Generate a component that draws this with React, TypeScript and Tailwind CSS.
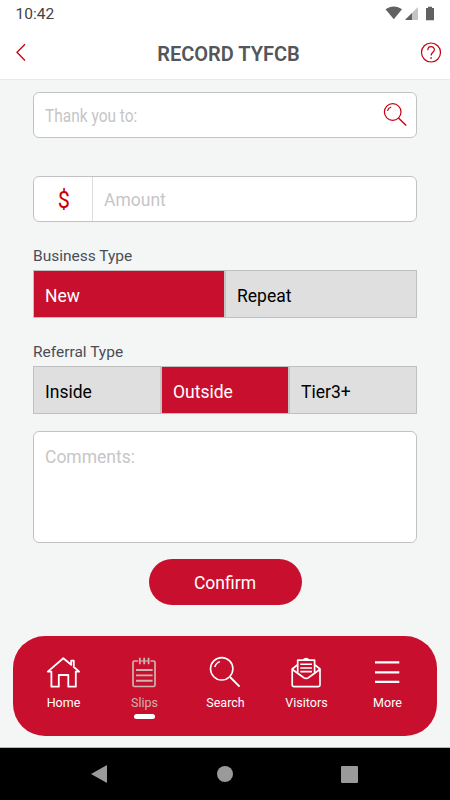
import React, { useState } from 'react';
import clsx from 'clsx';

interface SegmentedProps {
  options: string[];
  value: string;
  onChange: (value: string) => void;
}

function Segmented({ options, value, onChange }: SegmentedProps) {
  return (
    <div className="flex h-12 border border-[#c0c0c0]">
      {options.map((option, index) => (
        <button
          key={option}
          onClick={() => onChange(option)}
          className={clsx(
            'flex-1 pl-[11px] pt-1 text-left text-[17.5px]',
            index > 0 && 'border-l-2 border-[#c4c4c4]',
            option === value
              ? 'bg-[#c8102e] text-white'
              : 'bg-[#dfdfdf] text-black'
          )}
        >
          {option}
        </button>
      ))}
    </div>
  );
}

function StatusBar() {
  return (
    <div className="flex h-[27px] items-center justify-between pt-px pl-[15.5px] pr-[15px]">
      <span className="pt-px text-[15.5px] leading-none text-[#424242]">10:42</span>
      <svg width="50" height="16" viewBox="0 0 50 16" fill="#616161">
        <path d="M0.5 3.3C5.2 -0.6 12.4 -0.6 17 3.3L8.8 13.3Z" />
        <path d="M33 1V14H20Z" fill="#c4c4c4" />
        <path d="M27 7V14H20Z" />
        <path d="M43 0.7h4v1.4h2V14.2h-8V2.1h2Z" />
      </svg>
    </div>
  );
}

function Header() {
  return (
    <header className="flex h-[53px] items-center justify-between border-b border-[#e9ebeb] pl-[15px] pr-[8px]">
      <svg width="20" height="20" viewBox="0 0 20 20" fill="none" stroke="#c4000f" strokeWidth="1.3">
        <path d="M10 1.3L2 9.3L10 17.5" />
      </svg>
      <h1 className="ml-[2px] pt-px text-[20px] font-semibold text-[#53565a]">RECORD TYFCB</h1>
      <svg width="22" height="22" viewBox="0 0 22 22" fill="none" stroke="#c4000f" strokeWidth="1.2">
        <circle cx="11" cy="10.5" r="9.5" />
        <path d="M7.8 8.3C7.8 3.6 14.4 3.6 14.4 7.8C14.4 10.4 11.1 10.3 11.1 13.6" />
        <path d="M11.1 15.2V16.8" strokeWidth="1.5" />
      </svg>
    </header>
  );
}

const navItems = [
  {
    label: 'Home',
    icon: (
      <path d="M2.8 16.6L18.3 3.2L26.2 9.8V5.7H28.8V12L34.2 16.6H30.8V31.7H23.3V20H13.8V31.7H6.4V16.6Z" strokeWidth="1.8" />
    ),
  },
  {
    label: 'Slips',
    icon: (
      <>
        <path d="M12 6H8.5Q7 6 7 7.5V30Q7 31.5 8.5 31.5H27.5Q29 31.5 29 30V7.5Q29 6 27.5 6H24.5" strokeWidth="1.7" />
        <path d="M13.8 2.8V9.3M18.2 2.8V9.3M22.6 2.8V9.3" strokeWidth="1.8" />
        <path d="M14 6H22.6" strokeWidth="1.2" />
        <path d="M10 15H26.6M10 20.4H26.6M10 25.7H26.6" strokeWidth="1.9" />
      </>
    ),
  },
  {
    label: 'Search',
    icon: (
      <>
        <circle cx="14.7" cy="13.8" r="11.2" strokeWidth="1.6" />
        <path d="M23 22L32.6 31.6" strokeWidth="1.8" />
        <path d="M7.8 12Q9 7.8 13 6.6" strokeWidth="1.5" />
      </>
    ),
  },
  {
    label: 'Visitors',
    icon: (
      <>
        <path d="M9.3 10L4.2 14V30Q4.2 31.6 5.8 31.6H30.4Q32 31.6 32 30V14L27 10" strokeWidth="1.7" />
        <path d="M9.7 17.8V5.2H26.6V17.8M15 5.2Q18.1 1.8 21.2 5.2" strokeWidth="1.7" />
        <path d="M4.4 14.5L15.2 22.3Q18.1 24.6 21 22.3L31.8 14.5" strokeWidth="1.7" />
        <path d="M12.3 9.3H24M12.3 13H24M12.3 16.6H24" strokeWidth="1.6" />
      </>
    ),
  },
  {
    label: 'More',
    icon: <path d="M6 7.4H30.3M6 17.4H30.3M6 26.9H30.3" strokeWidth="2.3" />,
  },
];

function BottomNav() {
  const [active, setActive] = useState('Slips');

  return (
    <nav className="mx-[13px] mt-[31px] flex h-[100px] rounded-[32px] bg-[#c8102e] px-[9.5px] pt-[19px]">
      {navItems.map(({ label, icon }) => (
        <button
          key={label}
          onClick={() => setActive(label)}
          className={clsx(
            'flex flex-1 flex-col items-center',
            label === active ? 'text-[#cdb3b1]' : 'text-white'
          )}
        >
          <svg width="36" height="36" viewBox="0 0 36 36" fill="none" stroke="currentColor" strokeLinejoin="round">
            {icon}
          </svg>
          <span className="mt-1 pl-px text-[12.5px] leading-4">{label}</span>
          {label === active && <span className="mt-[3px] h-[5px] w-[21px] rounded-full bg-white" />}
        </button>
      ))}
    </nav>
  );
}

export default function App() {
  const [businessType, setBusinessType] = useState('New');
  const [referralType, setReferralType] = useState('Outside');

  return (
    <div className="flex h-[800px] w-[450px] flex-col overflow-hidden bg-[#f4f6f6] font-[Roboto,sans-serif]">
      <div className="bg-white">
        <StatusBar />
        <Header />
      </div>

      <main className="flex flex-col px-[33px] pt-3">
        <div className="flex h-[46px] items-center justify-between rounded-[6px] border border-[#c2c2c2] bg-white pl-[11px] pr-[9px]">
          <span className="origin-left scale-x-[0.86] text-[18px] text-[#c6c6c6]">Thank you to:</span>
          <svg width="24" height="24" viewBox="0 0 24 24" fill="none" stroke="#c4000f" strokeWidth="1.2">
            <circle cx="9.7" cy="9" r="8.3" />
            <path d="M15.5 15L23.2 22.4" strokeWidth="1.4" />
            <path d="M4.4 7.8Q5.2 4.8 8.2 4" />
          </svg>
        </div>

        <div className="mt-[38px] flex h-[46px] items-center rounded-[6px] border border-[#c2c2c2] bg-white">
          <div className="flex h-full w-[59px] items-center justify-center border-r border-[#dcdcdc] pt-[2px] pl-[2px] text-[24px] text-[#c8000c]">
            <span className="scale-x-90">$</span>
          </div>
          <span className="ml-[11px] pt-[2px] text-[17.5px] text-[#c6c6c6]">Amount</span>
        </div>

        <div className="mt-6 mb-1 text-[15.5px] leading-5 text-[#4a4d55]">Business Type</div>
        <Segmented options={['New', 'Repeat']} value={businessType} onChange={setBusinessType} />

        <div className="mt-6 mb-1 text-[15.5px] leading-5 text-[#4a4d55]">Referral Type</div>
        <Segmented options={['Inside', 'Outside', 'Tier3+']} value={referralType} onChange={setReferralType} />

        <div className="mt-[17px] h-[112px] rounded-[6px] border border-[#c2c2c2] bg-white pt-3 pl-[11px] text-[17.5px] text-[#c6c6c6]">
          Comments:
        </div>

        <button className="mt-4 h-[46px] w-[153px] self-center rounded-full bg-[#c8102e] pt-[2px] text-[17.5px] text-white">
          Confirm
        </button>
      </main>

      <BottomNav />

      <div className="mt-auto flex h-[53px] items-center justify-between border-t border-[#b5b5b5] bg-black pr-[92px] pl-[91px]">
        <svg width="16" height="18" viewBox="0 0 16 18" fill="#9a9a9a">
          <path d="M0 9L16 0V18Z" />
        </svg>
        <span className="ml-px size-4 rounded-full bg-[#9a9a9a]" />
        <span className="size-[17px] rounded-[1px] bg-[#9a9a9a]" />
      </div>
    </div>
  );
}
